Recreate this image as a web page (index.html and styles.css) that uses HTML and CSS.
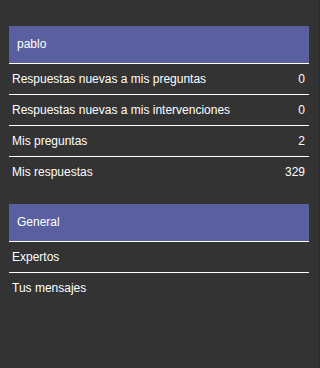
FILE: index.html
```html
<!DOCTYPE html>
<html lang="es">
<head>
<meta charset="utf-8">
<title>Menú</title>
<link rel="stylesheet" href="styles.css">
</head>
<body>
<div class="page">
  <section class="menu">
    <div class="menu-head">pablo</div>
    <ul class="menu-list">
      <li class="menu-item"><span>Respuestas nuevas a mis preguntas</span><span class="count">0</span></li>
      <li class="menu-item"><span>Respuestas nuevas a mis intervenciones</span><span class="count">0</span></li>
      <li class="menu-item"><span>Mis preguntas</span><span class="count">2</span></li>
      <li class="menu-item"><span>Mis respuestas</span><span class="count">329</span></li>
    </ul>
  </section>
  <section class="menu">
    <div class="menu-head">General</div>
    <ul class="menu-list">
      <li class="menu-item"><span>Expertos</span></li>
      <li class="menu-item"><span>Tus mensajes</span></li>
    </ul>
  </section>
</div>
</body>
</html>
```

FILE: styles.css
```css
html, body {
  margin: 0;
  padding: 0;
  background: #333333;
}
body {
  font-family: "Liberation Sans", Arial, sans-serif;
  font-size: 12px;
  color: #ffffff;
}
.page {
  box-sizing: border-box;
  min-height: 100vh;
  padding: 26px 0 0 9px;
  border-right: 1px solid #2a2a2a;
  display: flex;
  flex-direction: column;
  gap: 17px;
}
.menu {
  width: 300px;
}
.menu-head {
  background: #5a609f;
  height: 37px;
  line-height: 37px;
  padding-left: 8px;
  border-bottom: 1px solid #ffffff;
}
.menu-list {
  list-style: none;
  margin: 0;
  padding: 0;
}
.menu-item {
  display: flex;
  justify-content: space-between;
  align-items: center;
  height: 30px;
  padding: 0 4px 0 3px;
  border-bottom: 1px solid #ffffff;
}
.menu-item:last-child {
  border-bottom: none;
}
```
